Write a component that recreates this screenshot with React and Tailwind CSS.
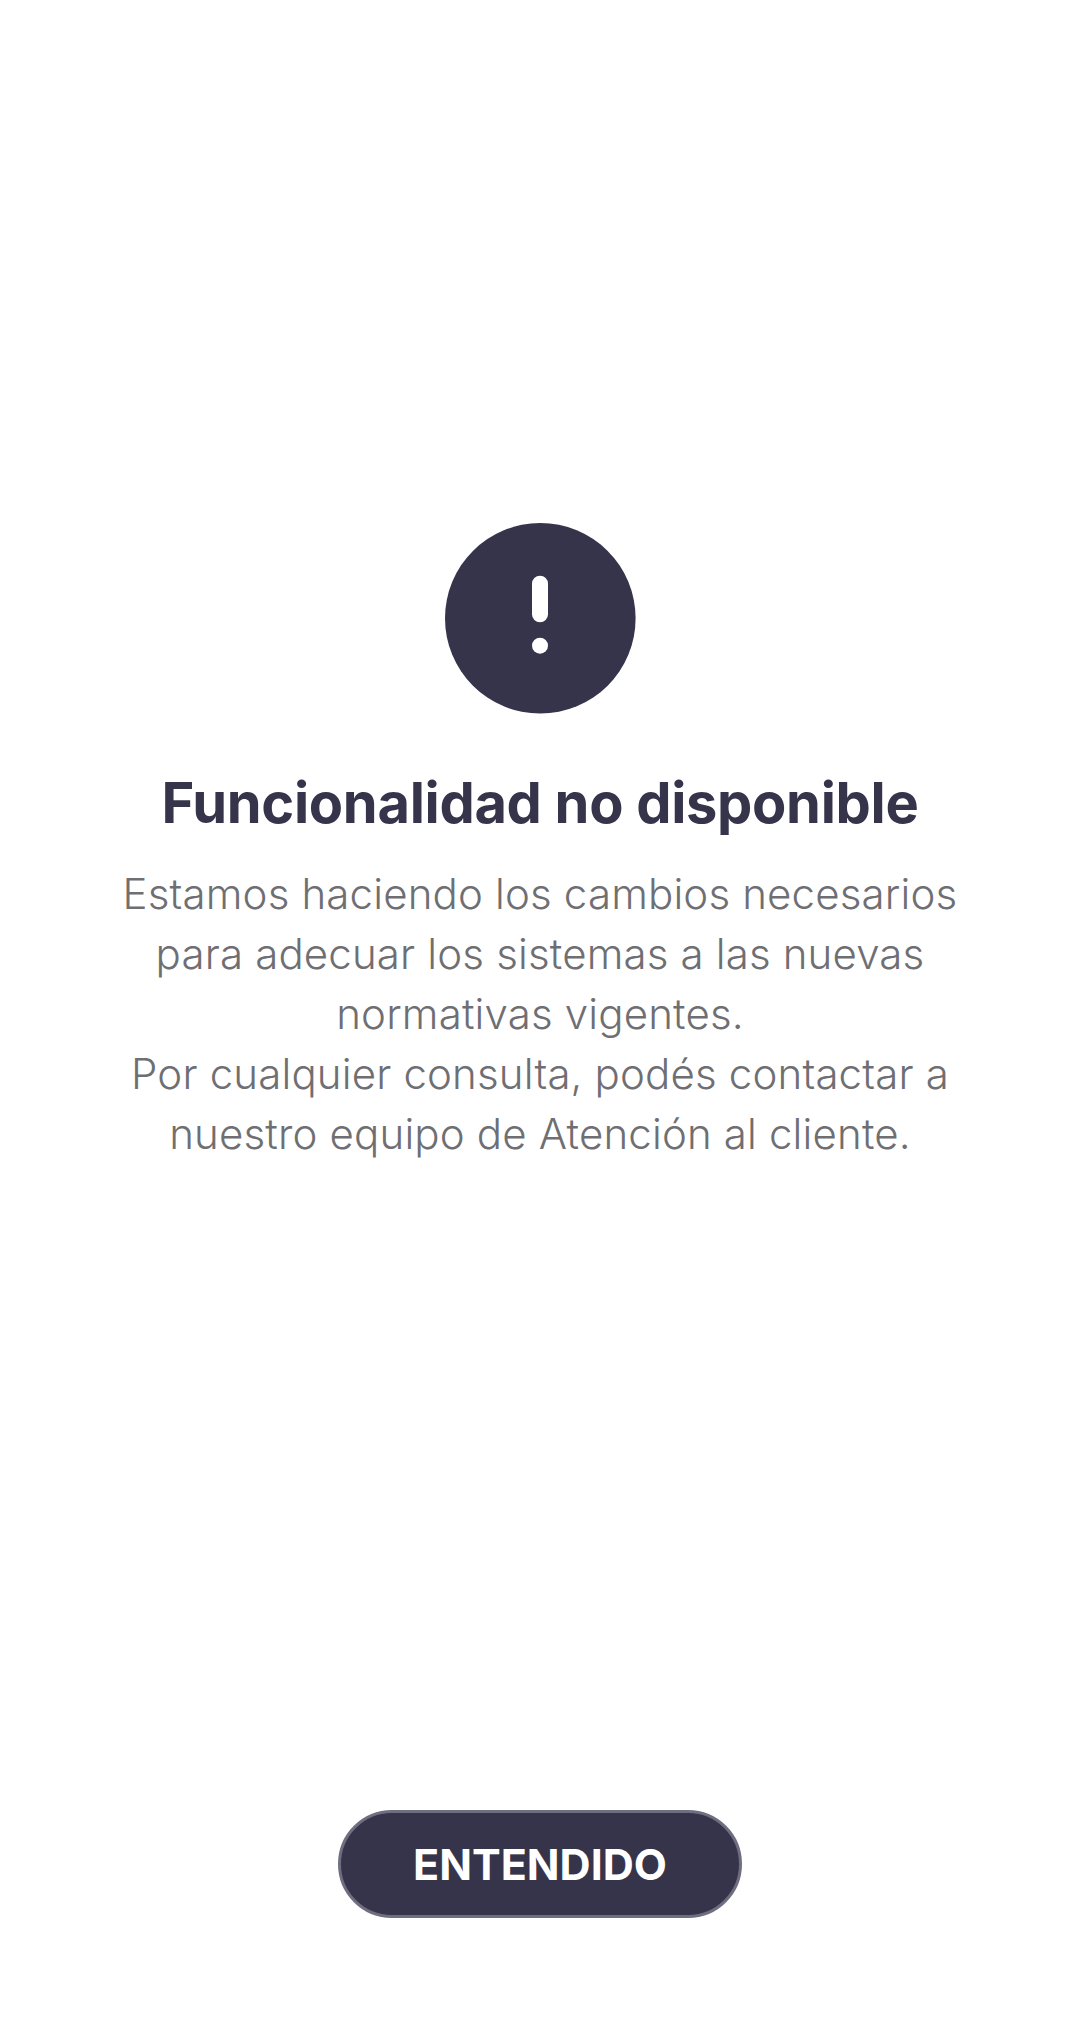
import React from 'react';

const AlertIcon = () => (
  <svg width="191" height="191" viewBox="0 0 191 191" className="block">
    <circle cx="95.3" cy="95.3" r="95.3" fill="#36344a" />
    <rect x="87" y="52.7" width="16" height="46.6" rx="8" fill="#ffffff" />
    <circle cx="95" cy="122.7" r="8" fill="#ffffff" />
  </svg>
);

const App = () => {
  return (
    <div className="h-[2027px] bg-white pl-[15px] flex flex-col items-center font-['Inter',sans-serif] overflow-hidden">
      <div className="mt-[523px]">
        <AlertIcon />
      </div>
      <h1 className="mt-[54px] text-[56px] leading-[70px] font-bold tracking-[-0.3px] text-[#36344a] text-center whitespace-nowrap">
        Funcionalidad no disponible
      </h1>
      <p className="mt-[26px] text-[42px] leading-[60px] font-light tracking-[0.16px] text-[#6f6f73] text-center whitespace-nowrap">
        Estamos haciendo los cambios necesarios
        <br />
        para adecuar los sistemas a las nuevas
        <br />
        normativas vigentes.
        <br />
        Por cualquier consulta, podés contactar a
        <br />
        nuestro equipo de Atención al cliente.
      </p>
      <button className="mt-auto mb-[109px] w-[404px] h-[108px] rounded-full bg-[#36344a] border-[3px] border-[#6f6e80] text-white text-[43px] font-bold">
        ENTENDIDO
      </button>
    </div>
  );
};

export default App;
